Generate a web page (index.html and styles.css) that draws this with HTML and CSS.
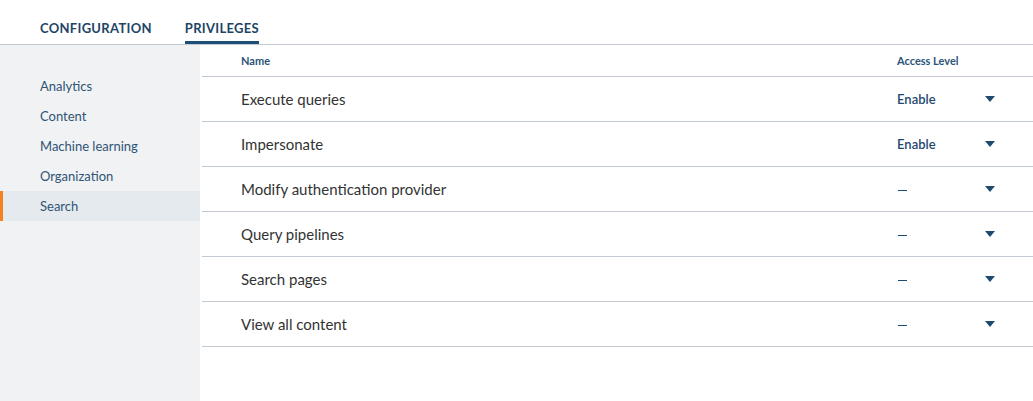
FILE: index.html
```html
<!DOCTYPE html>
<html>
<head>
<meta charset="utf-8">
<link rel="stylesheet" href="styles.css">
</head>
<body>
<header class="tabs">
  <div class="tab">CONFIGURATION</div>
  <div class="tab active">PRIVILEGES</div>
</header>
<div class="body">
  <nav class="side">
    <div class="side-item">Analytics</div>
    <div class="side-item">Content</div>
    <div class="side-item">Machine learning</div>
    <div class="side-item">Organization</div>
    <div class="side-item selected">Search</div>
  </nav>
  <main class="main">
    <div class="row head">
      <div class="c-name">Name</div>
      <div class="c-level">Access Level</div>
    </div>
    <div class="row">
      <div class="c-name">Execute queries</div>
      <div class="c-level val">Enable</div>
      <div class="c-arrow"><span class="tri"></span></div>
    </div>
    <div class="row">
      <div class="c-name">Impersonate</div>
      <div class="c-level val">Enable</div>
      <div class="c-arrow"><span class="tri"></span></div>
    </div>
    <div class="row">
      <div class="c-name">Modify authentication provider</div>
      <div class="c-level val"><span class="dash"></span></div>
      <div class="c-arrow"><span class="tri"></span></div>
    </div>
    <div class="row">
      <div class="c-name">Query pipelines</div>
      <div class="c-level val"><span class="dash"></span></div>
      <div class="c-arrow"><span class="tri"></span></div>
    </div>
    <div class="row">
      <div class="c-name">Search pages</div>
      <div class="c-level val"><span class="dash"></span></div>
      <div class="c-arrow"><span class="tri"></span></div>
    </div>
    <div class="row">
      <div class="c-name">View all content</div>
      <div class="c-level val"><span class="dash"></span></div>
      <div class="c-arrow"><span class="tri"></span></div>
    </div>
  </main>
</div>
</body>
</html>
```
FILE: styles.css
```css
* { box-sizing: border-box; }
html, body { margin: 0; padding: 0; height: 100%; }
body {
  font-family: Lato, "Open Sans", sans-serif;
  background: #fff;
  display: flex;
  flex-direction: column;
  overflow: hidden;
}
.tabs {
  display: flex;
  gap: 33px;
  padding-left: 40px;
  height: 45px;
  border-bottom: 1px solid #c4cad2;
  flex: none;
}
.tab {
  font-size: 13px;
  font-weight: 700;
  color: #1e4466;
  letter-spacing: 0.3px;
  padding-top: 20px;
  height: 44px;
  border-bottom: 3px solid transparent;
}
.tab.active {
  border-bottom-color: #1d4f76;
  margin-bottom: -1px;
}
.body {
  flex: 1;
  display: flex;
}
.side {
  width: 200px;
  background: #f1f2f4;
  padding-top: 26px;
  flex: none;
}
.side-item {
  height: 30px;
  line-height: 30px;
  padding-left: 40px;
  font-size: 13px;
  color: #2f5475;
}
.side-item.selected {
  background: #e5eaef;
  border-left: 3px solid #f5821f;
  padding-left: 37px;
}
.main {
  flex: 1;
  margin-left: 2px;
}
.row {
  display: flex;
  align-items: center;
  height: 45px;
  border-bottom: 1px solid #c4cad2;
  padding-left: 39px;
}
.row.head {
  height: 32px;
}
.c-name {
  flex: 1;
  font-size: 15px;
  color: #333;
}
.head .c-name, .head .c-level {
  font-size: 11px;
  font-weight: 700;
  color: #2c5479;
}
.head .c-level { width: 136px; }
.c-level {
  width: 88px;
}
.val {
  font-size: 13px;
  font-weight: 600;
  color: #1f4a70;
}
.dash {
  display: inline-block;
  width: 9px;
  height: 1.5px;
  background: #1f4a70;
  vertical-align: middle;
  margin-left: 1px;
}
.c-arrow {
  width: 48px;
  display: flex;
  align-items: center;
}
.tri {
  width: 0;
  height: 0;
  border-left: 5.5px solid transparent;
  border-right: 5.5px solid transparent;
  border-top: 6px solid #1f4a70;
}
```
